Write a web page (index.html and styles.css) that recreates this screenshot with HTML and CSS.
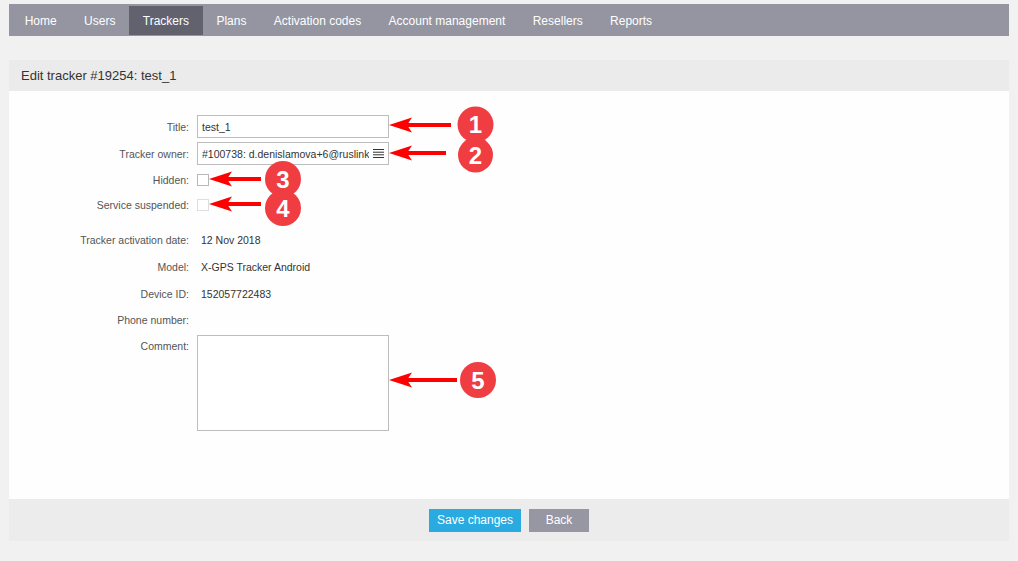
FILE: index.html
```html
<!DOCTYPE html>
<html lang="en">
<head>
<meta charset="utf-8">
<title>Edit tracker #19254: test_1</title>
<link rel="stylesheet" href="styles.css">
</head>
<body>
<div class="page">
  <nav class="nav">
    <a class="tab">Home</a>
    <a class="tab">Users</a>
    <a class="tab active">Trackers</a>
    <a class="tab">Plans</a>
    <a class="tab">Activation codes</a>
    <a class="tab">Account management</a>
    <a class="tab">Resellers</a>
    <a class="tab">Reports</a>
  </nav>
  <div class="panel">
    <div class="panel-head">Edit tracker #19254: test_1</div>
    <div class="panel-body">
      <div class="row h27"><span class="lbl">Title:</span><div class="input">test_1</div></div>
      <div class="row h27"><span class="lbl">Tracker owner:</span>
        <div class="input select"><span class="sel-text">#100738: d.denislamova+6@ruslink.ru</span>
          <svg class="burger" width="11" height="9" viewBox="0 0 11 9"><rect x="0" y="0" width="11" height="1" fill="#333"/><rect x="0" y="2.7" width="11" height="1" fill="#333"/><rect x="0" y="5.3" width="11" height="1" fill="#333"/><rect x="0" y="8" width="11" height="1" fill="#333"/></svg>
        </div>
      </div>
      <div class="row h25"><span class="lbl">Hidden:</span><div class="check"></div></div>
      <div class="row h26"><span class="lbl">Service suspended:</span><div class="check disabled"></div></div>
      <div class="row h27 gap-top"><span class="lbl">Tracker activation date:</span><span class="val">12 Nov 2018</span></div>
      <div class="row h27"><span class="lbl">Model:</span><span class="val">X-GPS Tracker Android</span></div>
      <div class="row h27"><span class="lbl">Device ID:</span><span class="val">152057722483</span></div>
      <div class="row h26"><span class="lbl">Phone number:</span><span class="val"></span></div>
      <div class="row top comment-row"><span class="lbl lbl-top">Comment:</span><div class="textarea"></div></div>
    </div>
    <div class="panel-foot">
      <button class="btn btn-save">Save changes</button>
      <button class="btn btn-back">Back</button>
    </div>
  </div>
</div>
<svg class="marks" width="1018" height="561" viewBox="0 0 1018 561">
  <g fill="#ff0000">
    <g transform="translate(389,125)"><path d="M0 0 L23 -7.5 L18 0 L23 7.5Z"/><rect x="15" y="-2" width="47" height="4"/></g>
    <g transform="translate(389,153)"><path d="M0 0 L23 -7.5 L18 0 L23 7.5Z"/><rect x="15" y="-2" width="42" height="4"/></g>
    <g transform="translate(209,179)"><path d="M0 0 L23 -7.5 L18 0 L23 7.5Z"/><rect x="15" y="-2" width="37" height="4"/></g>
    <g transform="translate(209,204)"><path d="M0 0 L23 -7.5 L18 0 L23 7.5Z"/><rect x="15" y="-2" width="37" height="4"/></g>
    <g transform="translate(389,380)"><path d="M0 0 L23 -7.5 L18 0 L23 7.5Z"/><rect x="15" y="-2" width="53" height="4"/></g>
  </g>
  <g class="badge"><circle cx="475.5" cy="124.5" r="18"/><text x="475.5" y="133">1</text></g>
  <g class="badge"><circle cx="475.5" cy="155" r="17.5"/><text x="475.5" y="163.5">2</text></g>
  <g class="badge"><circle cx="283" cy="179" r="18"/><text x="283" y="187.5">3</text></g>
  <g class="badge"><circle cx="283" cy="208" r="18"/><text x="283" y="216.5">4</text></g>
  <g class="badge"><circle cx="478" cy="380" r="18"/><text x="478" y="388.5">5</text></g>
</svg>
</body>
</html>
```
FILE: styles.css
```css
* { box-sizing: border-box; }
html, body { margin: 0; padding: 0; }
body {
  background: #f1f1f1;
  font-family: "Liberation Sans", Arial, sans-serif;
  color: #333;
  position: relative;
  width: 1018px;
  height: 561px;
  overflow: hidden;
}
.page { padding: 4px 9px 0; }
.nav {
  display: flex;
  height: 32px;
  padding: 2px 2px 0;
  background: #9495a1;
}
.tab {
  display: flex;
  align-items: center;
  height: 29px;
  padding: 0 13.7px;
  color: #fff;
  font-size: 12px;
}
.tab.active { background: #61626e; }
.panel { margin-top: 24px; }
.panel-head {
  height: 31px;
  display: flex;
  align-items: center;
  padding-left: 12px;
  background: #ebebeb;
  font-size: 13px;
  color: #333;
}
.panel-body {
  height: 408px;
  background: #fefefe;
  padding-top: 22px;
}
.row {
  display: flex;
  align-items: center;
  gap: 8px;
}
.row.top { align-items: flex-start; }
.h25 { height: 25px; }
.h26 { height: 26px; }
.h27 { height: 27px; }
.gap-top { margin-top: 8px; }
.comment-row { margin-top: 2px; }
.lbl {
  width: 180px;
  text-align: right;
  font-size: 10.5px;
  color: #555;
}
.lbl-top { padding-top: 5px; }
.val {
  font-size: 10.5px;
  color: #333;
  padding-left: 4px;
}
.input {
  width: 192px;
  height: 23px;
  border: 1px solid #bdbdbd;
  background: #fff;
  display: flex;
  align-items: center;
  padding: 0 4px;
  font-size: 10.5px;
  color: #333;
}
.select { gap: 4px; padding-right: 4px; }
.sel-text {
  flex: 1;
  white-space: nowrap;
  overflow: hidden;
}
.burger { flex: none; }
.check {
  width: 12px;
  height: 12px;
  border: 1px solid #b8b8b8;
  background: #fff;
}
.check.disabled { border-color: #dedede; }
.textarea {
  width: 192px;
  height: 96px;
  border: 1px solid #bdbdbd;
  background: #fff;
}
.panel-foot {
  height: 42px;
  background: #ececec;
  display: flex;
  align-items: center;
  justify-content: center;
  gap: 8px;
}
.btn {
  height: 23px;
  border: 0;
  margin: 0;
  padding: 0 8px;
  font-family: "Liberation Sans", Arial, sans-serif;
  font-size: 12px;
  color: #fff;
  cursor: pointer;
}
.btn-save { background: #29abe2; }
.btn-back { background: #9697a3; min-width: 60px; }
.marks {
  position: absolute;
  left: 0;
  top: 0;
  pointer-events: none;
}
.badge circle { fill: #ef3d42; }
.badge text {
  fill: #fff;
  font-family: "Liberation Sans", Arial, sans-serif;
  font-weight: bold;
  font-size: 24px;
  text-anchor: middle;
}
```
